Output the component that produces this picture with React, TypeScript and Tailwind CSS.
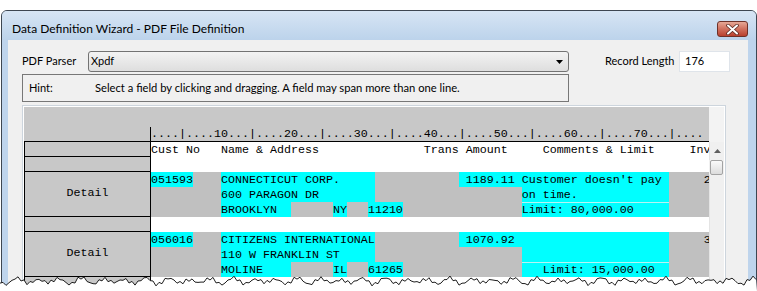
import React from "react";

type Seg = { t: string; c?: boolean; line?: boolean };
type Row = { white?: boolean; segs: Seg[] };

const sp = (n: number) => " ".repeat(n);

const ruler =
  "....|....10...|....20...|....30...|....40...|....50...|....60...|....70...|....";

const rows: Row[] = [
  {
    white: true,
    segs: [
      {
        t:
          "Cust No   Name & Address" +
          sp(15) +
          "Trans Amount" +
          sp(5) +
          "Comments & Limit" +
          sp(5) +
          "Inv",
      },
    ],
  },
  { white: true, segs: [{ t: "" }] },
  // record 1
  {
    segs: [
      { t: "051593", c: true },
      { t: sp(4) },
      { t: "CONNECTICUT CORP.".padEnd(22), c: true },
      { t: sp(12) },
      { t: " 1189.11 ", c: true },
      { t: "Customer doesn't pay".padEnd(21), c: true },
      { t: sp(5) + "2" },
    ],
  },
  {
    segs: [
      { t: sp(10) },
      { t: "600 PARAGON DR".padEnd(22), c: true },
      { t: sp(21) },
      { t: "on time.".padEnd(21), c: true },
    ],
  },
  {
    segs: [
      { t: sp(10) },
      { t: "BROOKLYN".padEnd(10), c: true },
      { t: sp(6) },
      { t: "NY", c: true },
      { t: sp(3) },
      { t: "11210", c: true },
      { t: sp(17) },
      { t: "Limit: 80,000.00".padEnd(21), c: true, line: true },
    ],
  },
  { white: true, segs: [{ t: "" }] },
  // record 2
  {
    segs: [
      { t: "056016", c: true },
      { t: sp(4) },
      { t: "CITIZENS INTERNATIONAL", c: true },
      { t: sp(12) },
      { t: " 1070.92 ", c: true },
      { t: sp(21), c: true },
      { t: sp(5) + "3" },
    ],
  },
  {
    segs: [
      { t: sp(10) },
      { t: "110 W FRANKLIN ST".padEnd(22), c: true },
      { t: sp(21) },
      { t: sp(21), c: true },
    ],
  },
  {
    segs: [
      { t: sp(10) },
      { t: "MOLINE".padEnd(10), c: true },
      { t: sp(6) },
      { t: "IL", c: true },
      { t: sp(3) },
      { t: "61265", c: true },
      { t: sp(17) },
      { t: ("   Limit: 15,000.00").padEnd(21), c: true, line: true },
    ],
  },
  { white: true, segs: [{ t: "" }] },
];

const boxes: { h: string; label?: string }[] = [
  { h: "h-[15px]" },
  { h: "h-[15px]" },
  { h: "h-[45px]", label: "Detail" },
  { h: "h-[15px]" },
  { h: "h-[45px]", label: "Detail" },
  { h: "h-[30px]" },
];

// jagged edge of the torn screenshot
const tear = (() => {
  const pts: string[] = [];
  for (let x = 0; x <= 757; x += 3) {
    const y =
      10 +
      2.4 * Math.sin(x * 0.29) +
      1.7 * Math.sin(x * 0.93 + 1.3) +
      1.1 * Math.sin(x * 2.3 + 0.4);
    pts.push(`${x},${y.toFixed(1)}`);
  }
  return pts;
})();

const mono = "font-['Liberation_Mono',monospace] text-[11.665px] text-black";

function CloseButton() {
  return (
    <div className="mr-[8px] mt-[10px] flex h-[16px] w-[31px] items-center justify-center rounded-[3px] border border-[#6e3128] bg-gradient-to-b from-[#e6a896] via-[#d0705e] to-[#b9402e]">
      <svg width="13" height="11" viewBox="0 0 13 11">
        <path d="M2 1.5 L11 9.5 M11 1.5 L2 9.5" stroke="#5b2a22" strokeWidth="3.6" strokeLinecap="round" />
        <path d="M2 1.5 L11 9.5 M11 1.5 L2 9.5" stroke="#ffffff" strokeWidth="2" strokeLinecap="round" />
      </svg>
    </div>
  );
}

function Scrollbar() {
  return (
    <div className="flex w-[15px] flex-col bg-[#f0f0f0]">
      <div className="h-[35px] bg-[#f3f3f3]" />
      <div className="flex h-[18px] items-center justify-center border-l border-[#e4e4e4]">
        <svg width="7" height="4" viewBox="0 0 7 4">
          <path d="M0 4 L3.5 0 L7 4 Z" fill="#5f5f5f" />
        </svg>
      </div>
      <div className="mx-px h-[15px] rounded-[2px] border border-[#a3a3a3] bg-gradient-to-b from-[#fafafa] to-[#dcdcdc]" />
      <div className="flex-1 border-l border-[#e4e4e4]" />
    </div>
  );
}

function DataGrid() {
  return (
    <div className="flex w-[685px] flex-col">
      <div className="h-[20px] bg-[#c8c8c8]" />
      <div className="flex h-[15px] border-b border-black bg-[#c8c8c8]">
        <div className="w-[126px]" />
        <div className={`flex-1 overflow-hidden whitespace-pre border-l border-black leading-[14px] ${mono}`}>
          {ruler}
        </div>
      </div>
      <div className="flex">
        <div className="flex w-[127px] flex-col">
          {boxes.map((b, i) => (
            <div
              key={i}
              className={`flex ${b.h} items-center justify-center border-x border-b border-black bg-[#c8c8c8] ${mono}`}
            >
              {b.label}
            </div>
          ))}
        </div>
        <div className="w-[558px] overflow-hidden">
          {rows.map((r, i) => (
            <div
              key={i}
              className={`flex h-[15px] ${r.white ? "bg-white" : "bg-[#c0c0c0]"}`}
            >
              {r.segs.map((s, j) => (
                <span
                  key={j}
                  className={`h-[15px] shrink-0 whitespace-pre leading-[17px] ${mono} ${
                    s.c ? "bg-[#00ffff]" : ""
                  } ${s.line ? "shadow-[inset_0_1px_0_#b9f3f3]" : ""}`}
                >
                  {s.t}
                </span>
              ))}
            </div>
          ))}
        </div>
      </div>
    </div>
  );
}

export default function App() {
  return (
    <div className="relative h-[291px] w-[757px] overflow-hidden bg-white font-['Lato',sans-serif] text-black">
      <div className="ml-px mt-[10px] flex h-[300px] w-[756px] flex-col rounded-t-[6px] border border-[#3d4651] bg-[#bed4ec]">
        {/* title bar */}
        <div className="flex h-[29px] rounded-t-[5px] bg-gradient-to-b from-[#d7e5f4] to-[#bcd3eb]">
          <div className="pl-[10px] pt-[10px] text-[12px] leading-[16px]">
            Data Definition Wizard - PDF File Definition
          </div>
          <div className="ml-auto">
            <CloseButton />
          </div>
        </div>

        <div className="flex flex-1">
          <div className="w-[6px]" />
          <div className="flex-1 bg-[#f0f0f0] pl-[14px] pt-[11px] text-[11px]">
            {/* parser row */}
            <div className="flex h-[21px] items-center">
              <div className="w-[66px]">PDF Parser</div>
              <div className="flex h-[21px] w-[481px] items-center rounded-[3px] border border-[#737373] bg-gradient-to-b from-[#f3f3f3] to-[#dedede] pl-[2px] pr-[5px]">
                <span>Xpdf</span>
                <svg className="ml-auto" width="7" height="4" viewBox="0 0 7 4">
                  <path d="M0 0 L7 0 L3.5 4 Z" fill="#000" />
                </svg>
              </div>
              <div className="ml-[36px]">Record Length</div>
              <div className="ml-auto mr-[18px] flex h-[21px] w-[51px] items-center border border-[#dfe4ea] bg-white pl-[5px]">
                176
              </div>
            </div>

            {/* hint */}
            <div className="mt-[2px] flex h-[28px] w-[547px] items-center border border-[#777777] pl-[6px]">
              <div className="w-[66px]">Hint:</div>
              <div className="text-[11.2px]">
                Select a field by clicking and dragging. A field may span more than one line.
              </div>
            </div>

            {/* field grid */}
            <div className="mt-[3px] w-[704px] border border-[#cdd5dd] bg-white p-px">
              <div className="flex h-[200px]">
                <DataGrid />
                <Scrollbar />
              </div>
            </div>
          </div>
          <div className="w-[8px]" />
        </div>
      </div>

      <svg
        className="absolute bottom-0 left-0"
        width="757"
        height="20"
        viewBox="0 0 757 20"
      >
        <polygon points={[...tear, "757,20", "0,20"].join(" ")} fill="#ffffff" />
        <polyline points={tear.join(" ")} fill="none" stroke="#1e1e1e" strokeWidth="1" />
      </svg>
    </div>
  );
}
